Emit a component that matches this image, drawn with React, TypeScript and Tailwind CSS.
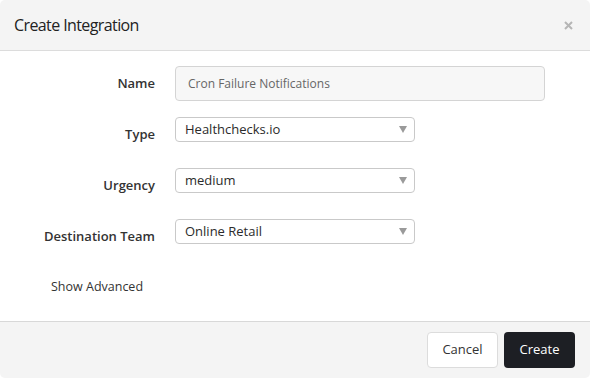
import React from 'react';

const font = { fontFamily: '"Open Sans", "Noto Sans", sans-serif' };

const Caret = () => (
  <svg width="8" height="7" viewBox="0 0 8 7" className="shrink-0">
    <path d="M0 0 L8 0 L4 7 Z" fill="#9a9a9a" />
  </svg>
);

const SelectBox: React.FC<{ value: string }> = ({ value }) => (
  <div className="w-[240px] h-[25px] flex items-center justify-between pl-[9px] pr-[7px] border border-[#c9c9c9] rounded-[4px] bg-white text-[13px] text-[#2b2b2b]">
    <span>{value}</span>
    <Caret />
  </div>
);

const Row: React.FC<{ label: string; children: React.ReactNode }> = ({ label, children }) => (
  <div className="flex h-[35px] gap-[20px]">
    <div className="w-[155px] shrink-0 flex items-center justify-end text-[13px] font-semibold text-[#333]">
      {label}
    </div>
    <div className="flex-1 pr-[45px]">{children}</div>
  </div>
);

const App: React.FC = () => {
  return (
    <div style={font} className="w-[590px] h-[378px] bg-white rounded-[5px] overflow-hidden flex flex-col">
      {/* Header */}
      <div className="h-[51px] shrink-0 bg-[#f4f4f4] border-b border-[#dcdcdc] flex items-center justify-between pl-[14px] pr-[17px]">
        <h2 className="text-[16px] tracking-[-0.6px] text-[#222]">Create Integration</h2>
        <svg width="9" height="9" viewBox="0 0 9 9">
          <path d="M1 1 L8 8 M8 1 L1 8" stroke="#b5b5b5" strokeWidth="2" />
        </svg>
      </div>

      {/* Body */}
      <div className="flex-1 flex flex-col gap-[16px] pt-[15px]">
        <Row label="Name">
          <div className="h-[35px] flex items-center px-[12px] border border-[#d4d4d4] rounded-[4px] bg-[#f7f7f7] text-[12px] text-[#666]">
            Cron Failure Notifications
          </div>
        </Row>
        <Row label="Type">
          <SelectBox value="Healthchecks.io" />
        </Row>
        <Row label="Urgency">
          <SelectBox value="medium" />
        </Row>
        <Row label="Destination Team">
          <SelectBox value="Online Retail" />
        </Row>
        <div className="h-[35px] flex items-center pl-[51px] text-[12.5px] font-medium text-[#333]">
          Show Advanced
        </div>
      </div>

      {/* Footer */}
      <div className="h-[57px] shrink-0 bg-[#f4f4f4] border-t border-[#d8d8d8] flex items-center justify-end gap-[6px] pr-[15px]">
        <button className="w-[71px] h-[36px] bg-white border border-[#dcdcdc] rounded-[4px] text-[13px] text-[#333]">
          Cancel
        </button>
        <button className="w-[71px] h-[36px] bg-[#1d1f24] rounded-[4px] text-[13px] text-white">
          Create
        </button>
      </div>
    </div>
  );
};

export default App;
